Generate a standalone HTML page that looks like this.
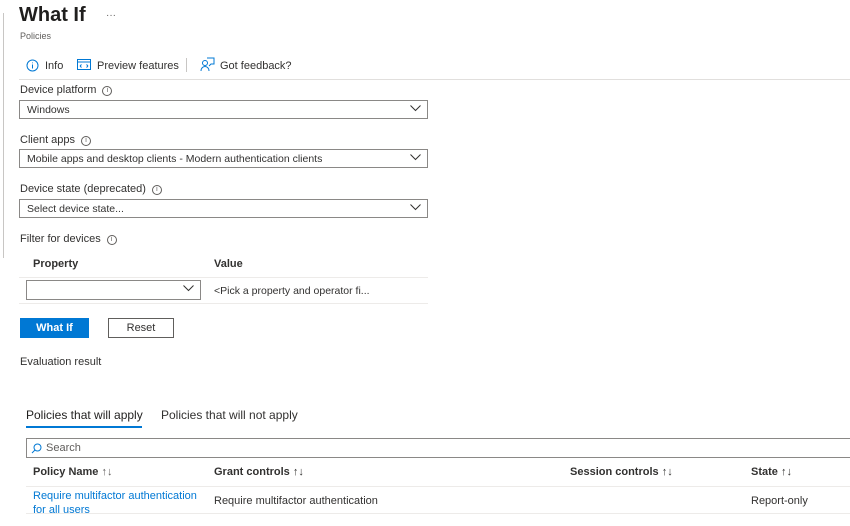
<!DOCTYPE html>
<html><head><style>
*{box-sizing:border-box;margin:0;padding:0}
body{width:850px;height:526px;overflow:hidden;background:#fff;font-family:"Liberation Sans",sans-serif;color:#323130;position:relative;font-size:11px}
.a{position:absolute;white-space:nowrap}
.sel{position:absolute;border:1px solid #8a8886;height:19px;background:#fff;font-size:10.5px;padding:3px 7px}
.chev{position:absolute;right:6px;top:4px}
.ic{display:inline-block;width:10px;height:10px;border:1px solid #605e5c;border-radius:50%;font-size:7px;text-align:center;line-height:8px;color:#605e5c;vertical-align:1px;margin-left:6px}
</style></head><body>
<div class="a" style="left:3px;top:13px;width:1px;height:245px;background:#c8c6c4"></div>
<div class="a" style="left:19px;top:4px;font-size:20px;font-weight:bold;color:#201f1e">What If</div>
<div class="a" style="left:106px;top:10px;font-size:10px;color:#605e5c">···</div>
<div class="a" style="left:20px;top:31px;font-size:9px;color:#605e5c">Policies</div>
<svg class="a" style="left:26px;top:59px" width="13" height="13"><circle cx="6.5" cy="6.5" r="5.5" fill="none" stroke="#0078d4"/><path d="M6.5 5.5v4M6.5 3.5v.8" stroke="#0078d4"/></svg>
<div class="a" style="left:45px;top:60px">Info</div>
<svg class="a" style="left:77px;top:59px" width="14" height="12"><rect x=".5" y=".5" width="13" height="10" fill="none" stroke="#0078d4"/><path d="M.5 3h13M3 7l1.5-1.5M3 7l1.5 1.5M11 7l-1.5-1.5M11 7l-1.5 1.5" stroke="#0078d4"/></svg>
<div class="a" style="left:97px;top:60px">Preview features</div>
<div class="a" style="left:186px;top:58px;width:1px;height:14px;background:#c8c6c4"></div>
<svg class="a" style="left:200px;top:57px" width="15" height="15"><circle cx="5" cy="6" r="2.5" fill="none" stroke="#0078d4"/><path d="M1 14c0-3 2-4.5 4-4.5s4 1.5 4 4.5M7 1h7v6h-3l-2 2" fill="none" stroke="#0078d4"/></svg>
<div class="a" style="left:220px;top:60px">Got feedback?</div>
<div class="a" style="left:19px;top:79px;width:831px;height:1px;background:#e1dfdd"></div>

<div class="a" style="left:20px;top:84px">Device platform<span class="ic">i</span></div>
<div class="sel" style="left:19px;top:100px;width:409px">Windows<svg class="chev" width="11" height="7"><path d="M.5.5l5 5 5-5" fill="none" stroke="#323130"/></svg></div>
<div class="a" style="left:20px;top:134px">Client apps<span class="ic">i</span></div>
<div class="sel" style="left:19px;top:149px;width:409px">Mobile apps and desktop clients - Modern authentication clients<svg class="chev" width="11" height="7"><path d="M.5.5l5 5 5-5" fill="none" stroke="#323130"/></svg></div>
<div class="a" style="left:20px;top:183px">Device state (deprecated)<span class="ic">i</span></div>
<div class="sel" style="left:19px;top:199px;width:409px">Select device state...<svg class="chev" width="11" height="7"><path d="M.5.5l5 5 5-5" fill="none" stroke="#323130"/></svg></div>
<div class="a" style="left:20px;top:233px">Filter for devices<span class="ic">i</span></div>
<div class="a" style="left:33px;top:258px;font-weight:bold">Property</div>
<div class="a" style="left:214px;top:258px;font-weight:bold">Value</div>
<div class="a" style="left:19px;top:277px;width:409px;height:1px;background:#edebe9"></div>
<div class="sel" style="left:26px;top:280px;width:175px;height:20px"><svg class="chev" width="11" height="7"><path d="M.5.5l5 5 5-5" fill="none" stroke="#323130"/></svg></div>
<div class="a" style="left:214px;top:285px;font-size:10.5px">&lt;Pick a property and operator fi...</div>
<div class="a" style="left:19px;top:303px;width:409px;height:1px;background:#edebe9"></div>
<div class="a" style="left:20px;top:318px;width:69px;height:20px;background:#0078d4;color:#fff;font-weight:bold;text-align:center;line-height:20px">What If</div>
<div class="a" style="left:108px;top:318px;width:66px;height:20px;border:1px solid #605e5c;text-align:center;line-height:18px">Reset</div>
<div class="a" style="left:20px;top:356px">Evaluation result</div>

<div class="a" style="left:26px;top:408px;font-size:12px;color:#201f1e">Policies that will apply</div>
<div class="a" style="left:26px;top:426px;width:116px;height:2px;background:#0078d4"></div>
<div class="a" style="left:161px;top:408px;font-size:12px">Policies that will not apply</div>
<div class="a" style="left:26px;top:438px;width:830px;height:20px;border:1px solid #8a8886"></div>
<svg class="a" style="left:31px;top:443px" width="11" height="11"><circle cx="6.5" cy="4.5" r="3.5" fill="none" stroke="#0078d4"/><path d="M4 7L1 10" stroke="#0078d4"/></svg>
<div class="a" style="left:46px;top:442px;color:#605e5c">Search</div>
<div class="a" style="left:33px;top:466px;font-weight:bold">Policy Name <span style="font-weight:normal;color:#605e5c">↑↓</span></div>
<div class="a" style="left:214px;top:466px;font-weight:bold">Grant controls <span style="font-weight:normal">↑↓</span></div>
<div class="a" style="left:570px;top:466px;font-weight:bold">Session controls <span style="font-weight:normal">↑↓</span></div>
<div class="a" style="left:751px;top:466px;font-weight:bold">State <span style="font-weight:normal">↑↓</span></div>
<div class="a" style="left:26px;top:486px;width:824px;height:1px;background:#edebe9"></div>
<div class="a" style="left:33px;top:489px;color:#0078d4;line-height:14px;height:25px;overflow:hidden;white-space:normal;width:170px">Require multifactor authentication for all users</div>
<div class="a" style="left:214px;top:495px">Require multifactor authentication</div>
<div class="a" style="left:751px;top:495px">Report-only</div>
<div class="a" style="left:26px;top:513px;width:824px;height:1px;background:#edebe9"></div>
</body></html>
